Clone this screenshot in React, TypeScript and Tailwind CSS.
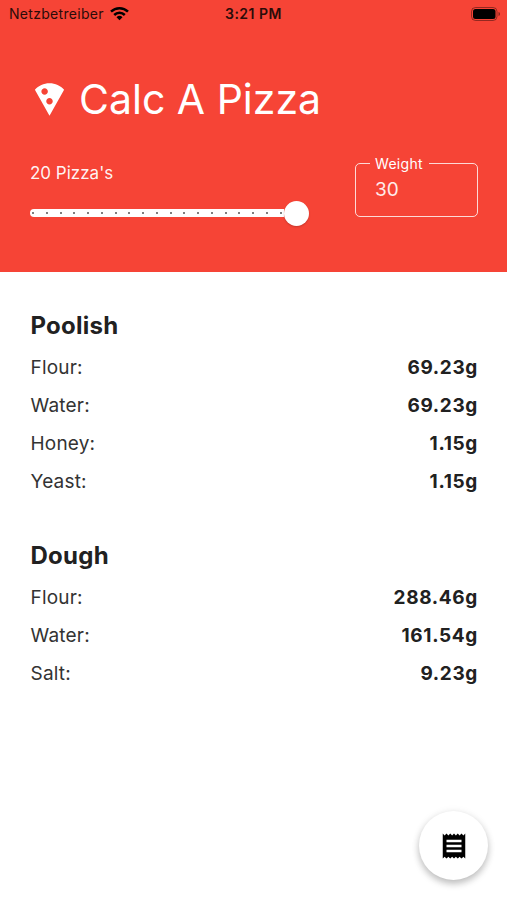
import { MdLocalPizza, MdReceipt } from 'react-icons/md'

type Ingredient = {
  label: string
  amount: string
}

type SectionProps = {
  title: string
  items: Ingredient[]
}

const poolish: Ingredient[] = [
  { label: 'Flour:', amount: '69.23g' },
  { label: 'Water:', amount: '69.23g' },
  { label: 'Honey:', amount: '1.15g' },
  { label: 'Yeast:', amount: '1.15g' },
]

const dough: Ingredient[] = [
  { label: 'Flour:', amount: '288.46g' },
  { label: 'Water:', amount: '161.54g' },
  { label: 'Salt:', amount: '9.23g' },
]

const WifiIcon: React.FC = () => (
  <svg width="19" height="14" viewBox="0 0 19 14" fill="none" stroke="currentColor" strokeWidth="2.5">
    <path d="M1 4.700a12.200 12.200 0 0 1 17 0" />
    <path d="M4.200 8a7.600 7.600 0 0 1 10.600 0" />
    <path d="M9.500 13.300 6.500 10.300a4.300 4.300 0 0 1 6 0z" fill="currentColor" stroke="none" />
  </svg>
)

const StatusBar: React.FC = () => (
  <div className="grid grid-cols-3 items-center h-[27px] pl-[9px] pr-[6px] text-[14px] text-[#2b0c09]">
    <div className="flex items-center gap-[6px]">
      <span className="tracking-[0.3px]">Netzbetreiber</span>
      <span className="text-black">
        <WifiIcon />
      </span>
    </div>
    <span className="-ml-[3px] text-center font-semibold tracking-[0.5px]">3:21 PM</span>
    <svg width="30" height="14" viewBox="0 0 30 14" className="justify-self-end text-black">
      <rect x="0.5" y="0.5" width="25.5" height="13" rx="4" fill="none" stroke="currentColor" strokeOpacity="0.4" />
      <rect x="2" y="2" width="22.500" height="10" rx="2.5" fill="currentColor" />
      <path d="M27.500 5v4c1-.3 1.500-1 1.500-2s-.5-1.700-1.500-2z" fill="currentColor" fillOpacity="0.45" />
    </svg>
  </div>
)

const Slider: React.FC = () => (
  <div className="flex items-center w-[279px] h-6 mt-4">
    <div className="flex items-center justify-between w-[254px] h-2 px-[2px] rounded-l-full bg-white">
      {Array.from({ length: 19 }, (_, i) => (
        <span key={i} className="size-[2px] rounded-full bg-[#555]" />
      ))}
    </div>
    <div className="size-[25px] rounded-full bg-white shadow-[0_1px_2px_rgba(0,0,0,0.2)]" />
  </div>
)

const Section: React.FC<SectionProps> = ({ title, items }) => (
  <section>
    <h2 className="h-[41px] text-[24px] leading-[36px] font-bold tracking-[0.25px]">{title}</h2>
    <dl>
      {items.map((item) => (
        <div key={item.label} className="flex items-center justify-between h-[38px] text-[19px]">
          <dt className="text-[#333] tracking-[0.2px]">{item.label}</dt>
          <dd className="-mr-[0.5px] font-bold tracking-[0.65px]">{item.amount}</dd>
        </div>
      ))}
    </dl>
  </section>
)

const App: React.FC = () => (
  <div className="relative h-[900px] bg-white font-['Inter',sans-serif] text-[#212121]">
    <header className="h-[272px] bg-[#f64436] text-white">
      <StatusBar />
      <h1 className="flex items-center gap-[10px] h-[60px] mt-[42px] pl-[30px] text-[41px]">
        <MdLocalPizza size={39} />
        <span className="pt-[2px]">Calc A Pizza</span>
      </h1>
      <div className="flex justify-between mt-[26px] pl-[30px] pr-[29px]">
        <div className="pt-[6px]">
          <p className="text-[17px] leading-6 text-white/95">20 Pizza's</p>
          <Slider />
        </div>
        <fieldset className="w-[123px] h-[62px] px-[14px] rounded-[5px] border-[1.5px] border-white/80">
          <legend className="pl-[5px] pr-[6px] text-[14px] leading-[17px] tracking-[0.3px]">Weight</legend>
          <span className="block pt-1 pl-[5px] text-[19px] text-white/90">30</span>
        </fieldset>
      </div>
    </header>
    <main className="flex flex-col gap-[37px] pt-9 pl-[30.500px] pr-[29.500px]">
      <Section title="Poolish" items={poolish} />
      <Section title="Dough" items={dough} />
    </main>
    <button className="absolute right-[19px] bottom-[20px] flex items-center justify-center size-[69px] rounded-full bg-white text-black shadow-[0_4px_7px_rgba(0,0,0,0.22),0_1px_9px_rgba(0,0,0,0.08)]">
      <MdReceipt size={30} />
    </button>
  </div>
)

export default App
